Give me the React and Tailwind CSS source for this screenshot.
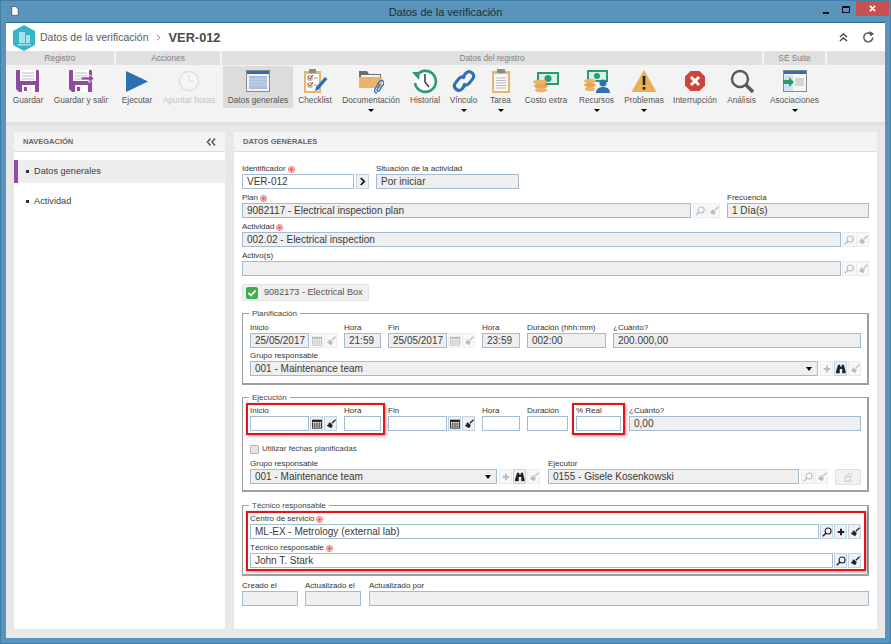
import React from "react";

const Floppy = ({ arrow }) => (
  <svg viewBox="0 0 26 24" className="w-[26px] h-[24px]">
    <path d="M1 2a1 1 0 0 1 1-1h21a2 2 0 0 1 1 1v20a1 1 0 0 1-1 1H4l-3-3z" fill="#8e4b9f" />
    <rect x="5" y="1" width="16" height="11" fill="#fff" />
    <path d="M7 4h12M7 7h12M7 10h12" stroke="#b9b9c6" strokeWidth="1" />
    <rect x="7" y="16" width="13" height="7" fill="#fff" />
    <rect x="9" y="18" width="3" height="4" fill="#8e4b9f" />
    {arrow && <path d="M13 8h8V5l5 4.500-5 4.500v-3h-8z" fill="#8e4b9f" stroke="#fff" strokeWidth="0.700" />}
  </svg>
);

const Play = () => (
  <svg viewBox="0 0 22 21" className="w-[22px] h-[21px]">
    <path d="M0 0l22 10.500L0 21z" fill="#2e6fb0" />
  </svg>
);

const Clock = () => (
  <svg viewBox="0 0 22 22" className="w-[22px] h-[22px]">
    <circle cx="11" cy="11" r="9.500" fill="#f6f6f6" stroke="#e0e0e0" strokeWidth="1.500" />
    <path d="M11 5v6h5" fill="none" stroke="#dcdcdc" strokeWidth="1" />
  </svg>
);

const WindowIcon = () => (
  <svg viewBox="0 0 24 22" className="w-[24px] h-[22px]">
    <rect x="0.500" y="0.500" width="23" height="21" fill="#f2f2f2" stroke="#8a8a8a" />
    <rect x="1" y="1" width="22" height="3" fill="#2e6fb0" />
    <rect x="3" y="6" width="18" height="13" fill="#a9c0dc" />
    <path d="M3 9h18M3 12h18M3 15h18" stroke="#c9d8ea" strokeWidth="1" />
  </svg>
);

const ChecklistIcon = () => (
  <svg viewBox="0 0 26 26" className="w-[26px] h-[26px]">
    <rect x="2" y="3" width="17" height="22" fill="#eeb36a" />
    <rect x="4" y="6" width="13" height="17" fill="#fff" />
    <rect x="7" y="1" width="7" height="4" fill="#8b8b8b" />
    <rect x="6" y="8" width="4" height="4" fill="#fff" stroke="#666" strokeWidth="0.700" />
    <rect x="6" y="15" width="4" height="4" fill="#fff" stroke="#666" strokeWidth="0.700" />
    <path d="M6 9l2 2 3-4M6 16l2 2 3-4" fill="none" stroke="#d8352a" strokeWidth="1" />
    <path d="M12 10h4M12 17h3" stroke="#999" strokeWidth="1" />
    <path d="M13 23l1-4L23 9l2.500 2L16 22z" fill="#2e6fb0" />
  </svg>
);

const FolderIcon = () => (
  <svg viewBox="0 0 26 26" className="w-[26px] h-[26px]">
    <path d="M1 3h8l2 3h12v5H1z" fill="#6d6d6d" />
    <path d="M3 7h19v3H3z" fill="#f4f4f4" />
    <path d="M1 20V9h23v11z" fill="#eeb36a" />
    <path d="M19 25c-2 0-3-2-2-4l4-7c1-2 3-2 4-1s1 3 0 4l-4 6c-1 1-2 0-2-1l3-6" fill="none" stroke="#2e6fb0" strokeWidth="1.300" />
  </svg>
);

const HistoryIcon = () => (
  <svg viewBox="0 0 26 26" className="w-[26px] h-[26px]">
    <path d="M5 7a10.500 10.500 0 1 1-2 8" fill="#fff" stroke="#2b9a6f" strokeWidth="2.600" />
    <path d="M0 4l8 0-1 8z" fill="#2b9a6f" />
    <path d="M13 6v8l4 5" fill="none" stroke="#444" strokeWidth="1.600" />
  </svg>
);

const LinkIcon = () => (
  <svg viewBox="0 0 26 26" className="w-[26px] h-[26px]">
    <g fill="none" stroke="#2e6fb0" strokeWidth="3">
      <path d="M11 10l4-5a4.500 4.500 0 0 1 7 5.500l-4 5a4.500 4.500 0 0 1-6 .5" />
      <path d="M15 16l-4 5a4.500 4.500 0 0 1-7-5.500l4-5a4.500 4.500 0 0 1 6-.5" />
    </g>
  </svg>
);

const ClipboardIcon = () => (
  <svg viewBox="0 0 20 26" className="w-[20px] h-[26px]">
    <rect x="1" y="3" width="18" height="22" fill="#eeb36a" />
    <rect x="3" y="6" width="14" height="17" fill="#f8f8f8" />
    <rect x="6" y="1" width="8" height="4" fill="#8b8b8b" />
    <path d="M5 10h10M5 12.500h10M5 15h10M5 17.500h10M5 20h10" stroke="#aaa" strokeWidth="0.800" />
  </svg>
);

const MoneyIcon = () => (
  <svg viewBox="0 0 26 26" className="w-[26px] h-[26px]">
    <rect x="4" y="4" width="22" height="13" fill="#2b9a6f" />
    <rect x="6" y="6" width="18" height="9" fill="#d9f0e4" />
    <circle cx="15" cy="10.500" r="3.500" fill="#2b9a6f" />
    <ellipse cx="7" cy="14" rx="7" ry="2.300" fill="#eeb36a" />
    <ellipse cx="8" cy="18" rx="7" ry="2.300" fill="#e6a552" />
    <ellipse cx="8" cy="22" rx="6" ry="2.300" fill="#eeb36a" />
  </svg>
);

const ResourcesIcon = () => (
  <svg viewBox="0 0 26 26" className="w-[26px] h-[26px]">
    <rect x="3" y="2" width="21" height="12" fill="#2b9a6f" />
    <rect x="5" y="4" width="17" height="8" fill="#d9f0e4" />
    <circle cx="13" cy="8" r="3" fill="#2b9a6f" />
    <ellipse cx="6" cy="13" rx="6" ry="2.200" fill="#eeb36a" />
    <ellipse cx="6" cy="17" rx="6" ry="2.200" fill="#e6a552" />
    <ellipse cx="6" cy="21" rx="5" ry="2.200" fill="#eeb36a" />
    <circle cx="19" cy="15" r="3.500" fill="#2e6fb0" />
    <path d="M12 25c0-4 3-6 7-6s7 2 7 6z" fill="#2e6fb0" />
  </svg>
);

const WarningIcon = () => (
  <svg viewBox="0 0 26 24" className="w-[26px] h-[24px]">
    <path d="M13 1l12.500 22H.5z" fill="#ecae55" />
    <rect x="11.700" y="7" width="2.600" height="9" fill="#222" />
    <rect x="11.700" y="18" width="2.600" height="2.600" fill="#222" />
  </svg>
);

const StopIcon = () => (
  <svg viewBox="0 0 22 22" className="w-[22px] h-[22px]">
    <path d="M6.500 1h9L21 6.500v9L15.500 21h-9L1 15.500v-9z" fill="#d0433a" />
    <path d="M7 7l8 8M15 7l-8 8" stroke="#fff" strokeWidth="3" />
  </svg>
);

const MagnifierIcon = () => (
  <svg viewBox="0 0 24 24" className="w-[24px] h-[24px]">
    <circle cx="10" cy="10" r="8" fill="none" stroke="#5b5b5b" strokeWidth="2.400" />
    <path d="M16 16l7 7" stroke="#5b5b5b" strokeWidth="3.400" />
  </svg>
);

const AssocIcon = () => (
  <svg viewBox="0 0 24 22" className="w-[24px] h-[22px]">
    <rect x="0.500" y="0.500" width="23" height="21" fill="#f5f5f5" stroke="#8a8a8a" />
    <rect x="1" y="1" width="22" height="3" fill="#2e6fb0" />
    <rect x="1" y="5" width="9" height="16" fill="#cfe3f2" />
    <rect x="12" y="8" width="9" height="8" fill="#d5d5d5" />
    <path d="M0 10h6V7l5 5-5 5v-3H0z" fill="#2b9a6f" />
  </svg>
);

const ribbonGroups = [
  {
    title: "Registro",
    className: "w-[108px] pl-[2px]",
    items: [
      { label: "Guardar", icon: <Floppy />, w: "w-[40px]" },
      { label: "Guardar y salir", icon: <Floppy arrow />, w: "w-[66px]" },
    ],
  },
  {
    title: "Acciones",
    className: "w-[104px]",
    items: [
      { label: "Ejecutar", icon: <Play />, w: "w-[42px]" },
      { label: "Apuntar horas", icon: <Clock />, w: "w-[62px]", off: true },
    ],
  },
  {
    title: "Datos del registro",
    className: "w-[540px] pl-[1px]",
    items: [
      { label: "Datos generales", icon: <WindowIcon />, w: "w-[70px]", active: true },
      { label: "Checklist", icon: <ChecklistIcon />, w: "w-[44px]" },
      { label: "Documentación", icon: <FolderIcon />, w: "w-[68px]", caret: true },
      { label: "Historial", icon: <HistoryIcon />, w: "w-[40px]" },
      { label: "Vínculo", icon: <LinkIcon />, w: "w-[37px]", caret: true },
      { label: "Tarea", icon: <ClipboardIcon />, w: "w-[37px]", caret: true },
      { label: "Costo extra", icon: <MoneyIcon />, w: "w-[54px]" },
      { label: "Recursos", icon: <ResourcesIcon />, w: "w-[47px]", caret: true },
      { label: "Problemas", icon: <WarningIcon />, w: "w-[48px]", caret: true },
      { label: "Interrupción", icon: <StopIcon />, w: "w-[54px]" },
      { label: "Análisis", icon: <MagnifierIcon />, w: "w-[39px]" },
    ],
  },
  {
    title: "SE Suite",
    className: "w-[61px]",
    items: [{ label: "Asociaciones", icon: <AssocIcon />, w: "w-[61px]", caret: true }],
  },
];

const Caret = () => <div className="mt-[1px] w-0 h-0 border-x-[3px] border-x-transparent border-t-[3px] border-t-black" />;

const RibbonItem = ({ item }) => (
  <div className={`${item.w} flex flex-col items-center`}>
    <div className={`w-full h-[42px] flex flex-col items-center ${item.active ? "bg-[#dcdcdc]" : ""}`}>
      <div className="h-[30px] flex items-center justify-center">{item.icon}</div>
      <span className={`text-[8.3px] leading-[9px] whitespace-nowrap ${item.off ? "text-[#c4c4c4]" : "text-[#555]"}`}>
        {item.label}
      </span>
    </div>
    {item.caret && <Caret />}
  </div>
);

const Ribbon = () => (
  <div className="flex gap-[2px] h-[71px] bg-[#f3f3f3] shrink-0">
    {ribbonGroups.map((group) => (
      <div key={group.title} className="flex flex-col">
        <div className="h-[14px] bg-[#e0e0e0] text-center text-[8.3px] leading-[14px] text-[#808080]">{group.title}</div>
        <div className={`${group.className} flex flex-1 pt-[1px]`}>
          {group.items.map((item) => (
            <RibbonItem key={item.label} item={item} />
          ))}
        </div>
      </div>
    ))}
    <div className="flex-1 flex flex-col">
      <div className="h-[14px] bg-[#e0e0e0]" />
    </div>
  </div>
);

const Required = () => (
  <svg viewBox="0 0 8 8" className="w-[7px] h-[7px] ml-[2px] shrink-0">
    <circle cx="4" cy="4" r="3.400" fill="#fff" stroke="#e2423c" strokeWidth="0.900" />
    <path d="M4 1.500v5M1.500 4h5M2.300 2.300l3.400 3.400M5.700 2.300L2.300 5.700" stroke="#e2423c" strokeWidth="0.800" />
  </svg>
);

const Label = ({ children, req }) => (
  <div className="flex items-center h-[12px] pt-[2px] text-[8px] leading-[10px] text-[#333] whitespace-nowrap">
    {children}
    {req && <Required />}
  </div>
);

const Input = ({ value, off, width, caret }) => (
  <div
    className={`h-[15px] flex items-center justify-between pl-[4px] pr-[5px] border border-[#a3bbd1] text-[10px] text-[#3a3a3a] whitespace-nowrap ${
      off ? "bg-[#efefef]" : "bg-white"
    } ${width || "w-full"}`}
  >
    <span>{value}</span>
    {caret && <div className="w-0 h-0 border-x-[3px] border-x-transparent border-t-[4px] border-t-black" />}
  </div>
);

const Broom = ({ c }) => (
  <svg viewBox="0 0 12 12" className="w-[10px] h-[10px]">
    <path d="M11.500 1L7 5" stroke={c} strokeWidth="1.600" />
    <path d="M4.500 3.800l3.700 3.700-2 3.500L1 8l1-1 1 .5-.5-1.500z" fill={c} />
  </svg>
);

const Search = ({ c }) => (
  <svg viewBox="0 0 12 12" className="w-[10px] h-[10px]">
    <circle cx="7.300" cy="4.700" r="3.600" fill="none" stroke={c} strokeWidth="1.300" />
    <path d="M4.500 7.500L1 11" stroke={c} strokeWidth="1.800" />
  </svg>
);

const Plus = ({ c }) => (
  <svg viewBox="0 0 12 12" className="w-[10px] h-[10px]">
    <path d="M6 2v8M2 6h8" stroke={c} strokeWidth="2.400" />
  </svg>
);

const Binoculars = ({ c }) => (
  <svg viewBox="0 0 12 12" className="w-[10px] h-[10px]">
    <path d="M2.500 1h2.500v2h2V1h2.500l2 8v2H7.500V6h-3v5H0V9z" fill={c} />
  </svg>
);

const Calendar = ({ c }) => (
  <svg viewBox="0 0 12 12" className="w-[10px] h-[10px]">
    <rect x="0.500" y="1.500" width="11" height="9.500" fill="#fff" stroke={c} />
    <rect x="0.500" y="1" width="11" height="2.500" fill={c} />
    <path d="M0.500 6h11M0.500 8.500h11M3.300 3.500v7.500M6 3.500v7.500M8.700 3.500v7.500" stroke={c} strokeWidth="0.800" />
  </svg>
);

const iconMap = { broom: Broom, search: Search, plus: Plus, binoculars: Binoculars, calendar: Calendar };

const IconBtn = ({ name, off }) => {
  const Icon = iconMap[name];
  return (
    <div
      className={`w-[13px] h-[15px] shrink-0 flex items-center justify-center border ${
        off ? "border-[#e6ecf1] bg-[#f7f8f9]" : "border-[#c3d2df] bg-[#edf1f5]"
      }`}
    >
      <Icon c={off ? "#bdbdbd" : "#222"} />
    </div>
  );
};

const Fieldset = ({ title, className, children }) => (
  <div className={`relative border border-[#9f9f9f] border-b-2 border-r-2 pr-[6px] pl-[7px] ${className}`}>
    <span className="absolute -top-[6px] left-[6px] px-[3px] bg-white text-[8px] leading-[12px] text-[#444]">{title}</span>
    {children}
  </div>
);

const RedBox = ({ className }) => (
  <div className={`absolute border-2 border-[#e2141c] shadow-[1px_1px_3px_rgba(0,0,0,0.4)] pointer-events-none ${className}`} />
);

const Icons = ({ names, off }) => (
  <div className="flex gap-[1px] ml-[1px]">
    {names.map((n) => (
      <IconBtn key={n} name={n} off={off} />
    ))}
  </div>
);

const DateField = ({ label, value, off }) => (
  <div>
    <Label>{label}</Label>
    <div className="flex">
      <Input value={value} off={off} width="w-[59px]" />
      <Icons names={["calendar", "broom"]} off={off} />
    </div>
  </div>
);

const Small = ({ label, value, off, width }) => (
  <div className={width}>
    <Label>{label}</Label>
    <Input value={value} off={off} />
  </div>
);

const Form = () => (
  <div className="px-[8px] pt-[10px]">
    <div className="flex">
      <div className="w-[112px]">
        <Label req>Identificador</Label>
        <Input value="VER-012" />
      </div>
      <div className="w-[13px] h-[15px] mt-[12px] ml-[2px] flex items-center justify-center border border-[#c3d2df] bg-[#edf1f5]">
        <svg viewBox="0 0 8 10" className="w-[7px] h-[9px]">
          <path d="M2 1l4 4-4 4" fill="none" stroke="#111" strokeWidth="2" />
        </svg>
      </div>
      <div className="w-[143px] ml-[7px]">
        <Label>Situación de la actividad</Label>
        <Input value="Por iniciar" off />
      </div>
    </div>

    <div className="flex mt-[2px]">
      <div className="w-[449px]">
        <Label req>Plan</Label>
        <Input value="9082117 - Electrical inspection plan" off />
      </div>
      <div className="mt-[12px] ml-[1px]">
        <Icons names={["search", "broom"]} off />
      </div>
      <div className="w-[142px] ml-[7px]">
        <Label>Frecuencia</Label>
        <Input value="1 Día(s)" off />
      </div>
    </div>

    <div className="mt-[2px]">
      <Label req>Actividad</Label>
      <div className="flex">
        <Input value="002.02 - Electrical inspection" off />
        <Icons names={["search", "broom"]} off />
      </div>
    </div>

    <div className="mt-[2px]">
      <Label>Activo(s)</Label>
      <div className="flex">
        <Input value="" off />
        <Icons names={["search", "broom"]} off />
      </div>
    </div>

    <div className="mt-[8px] w-[127px] h-[17px] flex items-center gap-[6px] pl-[3px] bg-[#efefef] border border-[#e2e2e2] rounded-[1px] text-[9.1px] text-[#555] whitespace-nowrap">
      <svg viewBox="0 0 12 12" className="w-[12px] h-[12px] shrink-0">
        <rect width="12" height="12" rx="2" fill="#3fae4f" />
        <path d="M2.500 6l2.500 2.500 4.500-5" fill="none" stroke="#fff" strokeWidth="1.800" />
      </svg>
      9082173 - Electrical Box
    </div>

    <Fieldset title="Planificación" className="mt-[12px] h-[72px] pt-[7px]">
      <div className="flex">
        <DateField label="Inicio" value="25/05/2017" off />
        <Small label="Hora" value="21:59" off width="w-[37px] ml-[7px]" />
        <div className="ml-[7px]">
          <DateField label="Fin" value="25/05/2017" off />
        </div>
        <Small label="Hora" value="23:59" off width="w-[38px] ml-[7px]" />
        <Small label="Duración (hhh:mm)" value="002:00" off width="w-[79px] ml-[7px]" />
        <Small label="¿Cuánto?" value="200.000,00" off width="flex-1 ml-[7px]" />
      </div>
      <div className="mt-[1px]">
        <Label>Grupo responsable</Label>
        <div className="flex">
          <Input value="001 - Maintenance team" off caret />
          <div className="flex gap-[1px] ml-[2px]">
            <IconBtn name="plus" off />
            <IconBtn name="binoculars" />
            <IconBtn name="broom" off />
          </div>
        </div>
      </div>
    </Fieldset>

    <Fieldset title="Ejecución" className="mt-[12px] h-[95px] pt-[6px]">
      <div className="flex">
        <div className="relative flex">
          <DateField label="Inicio" value="" />
          <Small label="Hora" value="" width="w-[37px] ml-[7px]" />
          <RedBox className="-left-[4px] -right-[4px] -top-[1px] -bottom-[4px]" />
        </div>
        <div className="ml-[7px]">
          <DateField label="Fin" value="" />
        </div>
        <Small label="Hora" value="" width="w-[38px] ml-[7px]" />
        <Small label="Duración" value="" width="w-[41px] ml-[7px]" />
        <div className="relative w-[45px] ml-[8px]">
          <Small label="% Real" value="" />
          <RedBox className="-left-[4px] -right-[4px] -top-[1px] -bottom-[4px]" />
        </div>
        <Small label="¿Cuánto?" value="0,00" off width="flex-1 ml-[8px]" />
      </div>
      <div className="mt-[13px] h-[10px] flex items-center text-[8px] text-[#444]">
        <div className="w-[9px] h-[9px] mr-[3px] bg-[#e4e4e4] border border-[#b5b5b5] rounded-[1px]" />
        Utilizar fechas planificadas
      </div>
      <div className="flex mt-[3px]">
        <div className="w-[247px]">
          <Label>Grupo responsable</Label>
          <Input value="001 - Maintenance team" off caret />
        </div>
        <div className="flex gap-[1px] mt-[12px] ml-[2px]">
          <IconBtn name="plus" off />
          <IconBtn name="binoculars" />
          <IconBtn name="broom" off />
        </div>
        <div className="w-[251px] ml-[8px]">
          <Label>Ejecutor</Label>
          <Input value="0155 - Gisele Kosenkowski" off />
        </div>
        <div className="mt-[12px] ml-[1px]">
          <Icons names={["search", "broom"]} off />
        </div>
        <div className="w-[26px] h-[16px] mt-[12px] ml-[7px] flex items-center justify-center bg-[#f1f1f1] border border-[#e0e0e0] rounded-[2px]">
          <svg viewBox="0 0 12 12" className="w-[9px] h-[9px]">
            <rect x="1.500" y="5" width="7" height="6" fill="none" stroke="#bbb" />
            <path d="M5 5V3a2.500 2.500 0 0 1 5 0v1" fill="none" stroke="#bbb" />
          </svg>
        </div>
      </div>
    </Fieldset>

    <Fieldset title="Técnico responsable" className="mt-[13px] h-[71px] pt-[6px]">
      <div className="relative">
        <Label req>Centro de servicio</Label>
        <div className="flex">
          <Input value="ML-EX - Metrology (external lab)" />
          <div className="flex gap-[1px] ml-[1px]">
            <IconBtn name="search" />
            <IconBtn name="plus" />
            <IconBtn name="broom" />
          </div>
        </div>
        <div className="mt-[2px]">
          <Label req>Técnico responsable</Label>
          <div className="flex">
            <Input value="John T. Stark" />
            <div className="flex gap-[1px] ml-[1px]">
              <IconBtn name="search" />
              <IconBtn name="broom" />
            </div>
          </div>
        </div>
        <RedBox className="-left-[4px] -right-[5px] -top-[1px] -bottom-[3px]" />
      </div>
    </Fieldset>

    <div className="flex mt-[3px]">
      <Small label="Creado el" value="" off width="w-[56px]" />
      <Small label="Actualizado el" value="" off width="w-[56px] ml-[7px]" />
      <Small label="Actualizado por" value="" off width="flex-1 ml-[8px]" />
    </div>
  </div>
);

export default function App() {
  return (
    <div className="w-[891px] h-[644px] flex flex-col overflow-hidden bg-[#5a94bb] border border-[#3f7ea8] font-['Liberation_Sans',Arial,sans-serif]">
      <div className="h-[21px] shrink-0 relative flex items-center justify-center pt-[2px] text-[11px] text-[#1c2d3a]">
        <svg viewBox="0 0 10 12" className="absolute left-[10px] top-[5px] w-[8px] h-[10px]">
          <path d="M1 .5h5l3 3v8H1z" fill="#fff" stroke="#333" strokeWidth="0.800" />
        </svg>
        Datos de la verificación
        <div className="absolute right-0 top-0 flex items-start">
          <div className="w-[20px] h-[16px] flex items-end justify-center pb-[3px]">
            <div className="w-[6px] h-[2px] bg-[#111]" />
          </div>
          <div className="w-[20px] h-[16px] flex items-center justify-center">
            <div className="w-[8px] h-[7px] border border-t-2 border-[#112]" />
          </div>
          <div className="w-[33px] h-[15px] bg-[#c75050] flex items-center justify-center mr-[1px]">
            <svg viewBox="0 0 8 8" className="w-[7px] h-[7px]">
              <path d="M1 1l6 6M7 1L1 7" stroke="#fff" strokeWidth="1.800" />
            </svg>
          </div>
        </div>
      </div>

      <div className="flex-1 mx-[5px] flex flex-col min-h-0 border-t border-[#2d6a93]">
        <div className="h-[28px] shrink-0 bg-white flex items-center pt-[1px] pl-[6px] pr-[10px]">
          <svg viewBox="0 0 24 26" className="w-[24px] h-[26px]">
            <path d="M12 0l11 6v14l-11 6L1 20V6z" fill="#36b5c9" />
            <path d="M7 7h6v11H7zM14 10h4v8h-4zM6 19h13v1.500H6z" fill="#a7e2ea" />
          </svg>
          <span className="ml-[4px] pt-[1px] text-[10.5px] text-[#5a5a5a]">Datos de la verificación</span>
          <svg viewBox="0 0 6 8" className="ml-[7px] w-[5px] h-[7px]">
            <path d="M1 .5L4.500 4 1 7.500" fill="none" stroke="#777" strokeWidth="1.100" />
          </svg>
          <span className="ml-[8px] pt-[1px] text-[12.8px] font-bold text-[#4a4a4a]">VER-012</span>
          <div className="ml-auto flex items-center gap-[14px]">
            <svg viewBox="0 0 10 10" className="w-[9px] h-[9px]">
              <path d="M1 4.500L5 1l4 3.500M1 9l4-3.500L9 9" fill="none" stroke="#444" strokeWidth="1.500" />
            </svg>
            <svg viewBox="0 0 14 14" className="w-[13px] h-[13px]">
              <path d="M11.500 7A4.800 4.800 0 1 1 9.500 3" fill="none" stroke="#555" strokeWidth="1.600" />
              <path d="M8 0l5 3-4 3z" fill="#555" />
            </svg>
          </div>
        </div>

        <Ribbon />

        <div className="flex-1 min-h-0 flex gap-[9px] bg-[#e8e8e8] border-t-[3px] border-[#e0e0e0] pt-[7px] pb-[9px] px-[8px]">
          <div className="w-[211px] shrink-0 bg-white rounded-[2px]">
            <div className="h-[20px] px-[9px] flex items-center justify-between bg-[#f4f4f4] border-b border-[#dedede]">
              <span className="text-[7.5px] font-bold text-[#666]">NAVEGACIÓN</span>
              <svg viewBox="0 0 10 8" className="w-[10px] h-[8px]">
                <path d="M4.500 .5L1.500 4l3 3.500M9 .5L6 4l3 3.500" fill="none" stroke="#555" strokeWidth="1.500" />
              </svg>
            </div>
            <div className="mt-[8px] h-[23px] flex items-center bg-[#eeeeee] border-l-4 border-[#8e4fa3] text-[9.2px] text-[#3c3c3c]">
              <span className="ml-[8px] mr-[5px] w-[3px] h-[3px] bg-[#333]" />
              Datos generales
            </div>
            <div className="mt-[7px] h-[23px] flex items-center pl-[4px] text-[9.2px] text-[#3c3c3c]">
              <span className="ml-[8px] mr-[5px] w-[3px] h-[3px] bg-[#333]" />
              Actividad
            </div>
          </div>

          <div className="flex-1 min-w-0 bg-white rounded-[2px]">
            <div className="h-[20px] px-[9px] flex items-center bg-[#f4f4f4] border-b border-[#dedede] text-[7.5px] font-bold text-[#666]">
              DATOS GENERALES
            </div>
            <Form />
          </div>
        </div>
      </div>
      <div className="h-[5px] shrink-0" />
    </div>
  );
}
